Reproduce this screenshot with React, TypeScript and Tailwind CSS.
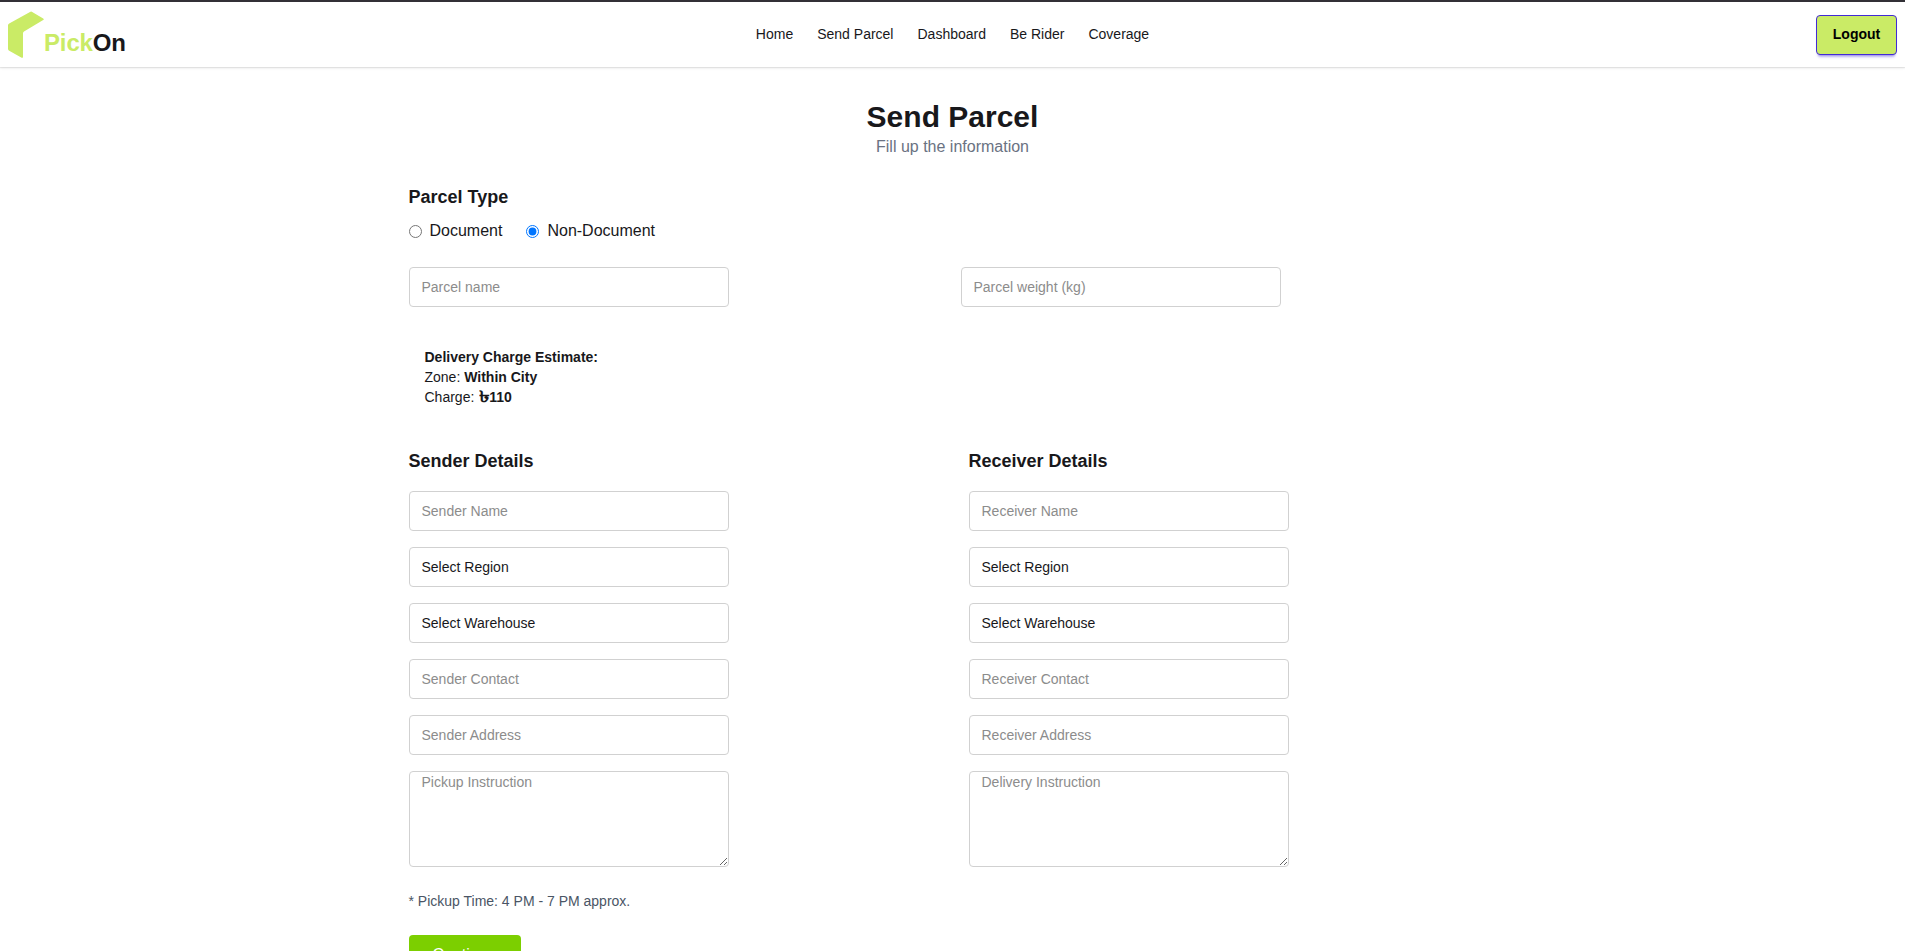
const navLinks = ["Home", "Send Parcel", "Dashboard", "Be Rider", "Coverage"];

const fieldClass =
  "block h-10 w-80 appearance-none rounded-sm border border-[#d1d1d1] bg-white px-3 text-sm text-[#18181b] outline-none placeholder:text-[#8c8c8c]";

function Logo() {
  return (
    <div className="flex items-end">
      <svg className="h-12 w-9" viewBox="0 0 36 48" fill="#caeb66">
        <path d="M0 14.6Q0 13.2 1.2 12.5L22 .9Q23.1 .2 24.2 .9L35.2 7.5Q36.4 8.3 35.2 9.1L16 20.4Q15 21.1 15 22.4V45.6Q15 47.6 13.2 46.6L1.2 39.8Q0 39.1 0 37.7Z" />
      </svg>
      <span className="text-2xl font-bold tracking-[-0.15px] text-[#18181b]">
        <span className="text-[#caeb66]">Pick</span>On
      </span>
    </div>
  );
}

function Navbar() {
  return (
    <header className="grid h-[65px] grid-cols-[1fr_auto_1fr] items-center bg-white px-2 shadow-[0_1px_1px_#00000012,0_1px_3px_#00000014]">
      <Logo />
      <nav className="flex gap-6 pb-0.5 text-sm text-[#18181b]">
        {navLinks.map((link) => (
          <a key={link} href="#">
            {link}
          </a>
        ))}
      </nav>
      <button className="h-10 w-[81px] justify-self-end rounded-sm border border-[#422ad5] bg-[#caeb66] pb-0.5 text-sm font-semibold text-black shadow-[0_3px_2px_-2px_#422ad54d,0_4px_3px_-2px_#422ad54d]">
        Logout
      </button>
    </header>
  );
}

function PartyDetails({ party, instruction }: { party: string; instruction: string }) {
  return (
    <section className="space-y-4">
      <h3 className="text-lg font-semibold">{party} Details</h3>
      <input className={fieldClass} placeholder={`${party} Name`} />
      <select className={fieldClass}>
        <option>Select Region</option>
      </select>
      <select className={fieldClass}>
        <option>Select Warehouse</option>
      </select>
      <input className={fieldClass} placeholder={`${party} Contact`} />
      <input className={fieldClass} placeholder={`${party} Address`} />
      <textarea
        className="block h-24 w-80 rounded-sm border border-[#d1d1d1] bg-white px-3 text-sm outline-none placeholder:text-[#8c8c8c]"
        placeholder={`${instruction} Instruction`}
      />
    </section>
  );
}

export default function App() {
  return (
    <div className="h-screen overflow-hidden border-t-2 border-[#323036] bg-white font-['Liberation_Sans',Arial,sans-serif] text-[#18181b]">
      <Navbar />
      <main className="mx-auto max-w-6xl px-8 pt-8">
        <div className="mb-6 text-center">
          <h1 className="text-3xl font-bold">Send Parcel</h1>
          <p className="text-[#6a7282]">Fill up the information</p>
        </div>
        <form className="space-y-6">
          <div>
            <h3 className="mb-2 text-lg font-semibold">Parcel Type</h3>
            <div className="flex h-6 gap-6">
              <label>
                <input type="radio" name="type" className="mr-2 align-[-2px]" />
                Document
              </label>
              <label>
                <input type="radio" name="type" defaultChecked className="mr-2 align-[-2px]" />
                Non-Document
              </label>
            </div>
          </div>
          <div className="grid grid-cols-2 gap-4">
            <input className={fieldClass} placeholder="Parcel name" />
            <input className={fieldClass} placeholder="Parcel weight (kg)" />
          </div>
          <div className="p-4 text-sm">
            <p className="font-semibold">Delivery Charge Estimate:</p>
            <p>
              Zone: <strong>Within City</strong>
            </p>
            <p className="h-5">
              Charge:{" "}
              <strong>
                <span className="ml-px inline-block w-[10px] origin-left scale-x-[1.35] text-base leading-none">৳</span>110
              </strong>
            </p>
          </div>
          <div className="grid grid-cols-2 gap-8">
            <PartyDetails party="Sender" instruction="Pickup" />
            <PartyDetails party="Receiver" instruction="Delivery" />
          </div>
          <p className="text-sm text-[#4a5565]">* Pickup Time: 4 PM - 7 PM approx.</p>
          <button type="button" className="block rounded-sm bg-[#7ccf00] px-6 py-2 text-white">
            Continue
          </button>
        </form>
      </main>
    </div>
  );
}
